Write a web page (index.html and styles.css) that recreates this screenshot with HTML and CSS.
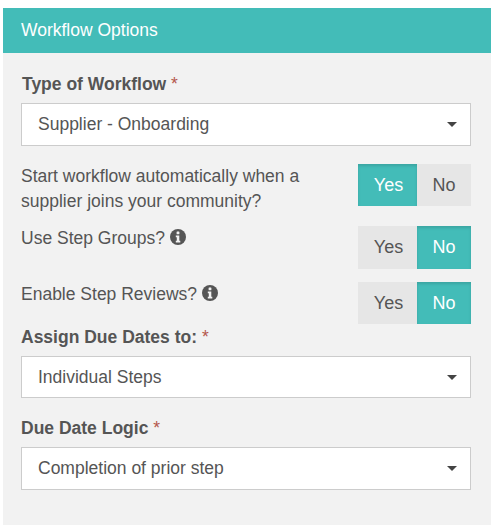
FILE: index.html
```html
<!DOCTYPE html>
<html lang="en">
<head>
<meta charset="utf-8">
<title>Workflow Options</title>
<link rel="stylesheet" href="styles.css">
</head>
<body>
<section class="panel">
  <h2 class="panel-title">Workflow Options</h2>
  <div class="panel-body">
    <div class="field field-type">
      <label class="label">Type of Workflow <span class="req">*</span></label>
      <div class="select"><span>Supplier - Onboarding</span><i class="caret"></i></div>
    </div>
    <div class="option option-start">
      <p class="option-text">Start workflow automatically when a supplier joins your community?</p>
      <div class="toggle toggle-short"><span class="btn on">Yes</span><span class="btn">No</span></div>
    </div>
    <div class="option option-groups">
      <p class="option-text">Use Step Groups?
        <svg class="info" viewBox="0 0 16 16"><circle cx="8" cy="8" r="8"/><rect x="6.6" y="2.6" width="2.8" height="2.6" rx=".5" fill="#f2f2f2"/><path d="M5.8 6.6h3.5v5.2h1v1.6H5.8v-1.6h1V8.200h-1z" fill="#f2f2f2"/></svg>
      </p>
      <div class="toggle"><span class="btn">Yes</span><span class="btn on">No</span></div>
    </div>
    <div class="option option-reviews">
      <p class="option-text">Enable Step Reviews?
        <svg class="info" viewBox="0 0 16 16"><circle cx="8" cy="8" r="8"/><rect x="6.6" y="2.6" width="2.8" height="2.6" rx=".5" fill="#f2f2f2"/><path d="M5.8 6.6h3.500v5.2h1v1.600H5.800v-1.600h1V8.200h-1z" fill="#f2f2f2"/></svg>
      </p>
      <div class="toggle toggle-short"><span class="btn">Yes</span><span class="btn on">No</span></div>
    </div>
    <div class="field field-assign">
      <label class="label">Assign Due Dates to: <span class="req">*</span></label>
      <div class="select select-short"><span>Individual Steps</span><i class="caret"></i></div>
    </div>
    <div class="field field-logic">
      <label class="label">Due Date Logic <span class="req">*</span></label>
      <div class="select"><span>Completion of prior step</span><i class="caret"></i></div>
    </div>
  </div>
</section>
</body>
</html>
```
FILE: styles.css
```css
html, body { margin: 0; padding: 0; background: #fff; }
body {
  padding: 8px 3px 0;
  font-family: "Liberation Sans", Arial, sans-serif;
  color: #555;
  height: 517px;
  overflow: hidden;
}
.panel { background: #f2f2f2; height: 517px; }
.panel-title {
  margin: 0;
  height: 45px;
  padding-left: 18px;
  background: #43bcb8;
  color: #fff;
  font-size: 17.500px;
  font-weight: 400;
  line-height: 44px;
}
.panel-body { padding: 0 20px 0 18px; }
.label {
  display: block;
  font-size: 17.500px;
  font-weight: 700;
  line-height: 20px;
  margin-bottom: 9px;
}
.field-type .label { padding-left: 1px; }
.req { color: #b5574c; font-weight: 400; }
.field-type { padding-top: 21px; }
.field-assign { padding-top: 3px; }
.field-logic { padding-top: 20px; }
.select {
  box-sizing: border-box;
  height: 43px;
  border: 1px solid #ccc;
  background: #fff;
  padding: 0 16px;
  display: flex;
  align-items: center;
  justify-content: space-between;
  font-size: 17.500px;
}
.select-short { height: 42px; }
.caret {
  width: 0;
  height: 0;
  border-left: 5px solid transparent;
  border-right: 5px solid transparent;
  border-top: 5px solid #444;
  margin-right: -3px;
}
.option { display: flex; justify-content: space-between; align-items: flex-start; }
.option-start { margin-top: 18px; }
.option-groups { margin-top: 12px; }
.option-reviews { margin-top: 13px; }
.option-text {
  margin: 0;
  font-size: 17.500px;
  line-height: 25px;
  width: 310px;
}
.info { width: 16px; height: 16px; fill: #555; vertical-align: -1px; }
.toggle { display: flex; height: 43px; font-size: 18px; }
.toggle-short { height: 42px; }
.btn {
  box-sizing: border-box;
  width: 59px;
  padding-left: 2px;
  background: #e6e6e6;
  color: #555;
  display: flex;
  align-items: center;
  justify-content: center;
}
.btn + .btn { width: 54px; padding-left: 0; }
.btn.on {
  background: #43bcb8;
  color: #fff;
  box-shadow: inset 0 2px 3px rgba(0,0,0,.12);
}
```
